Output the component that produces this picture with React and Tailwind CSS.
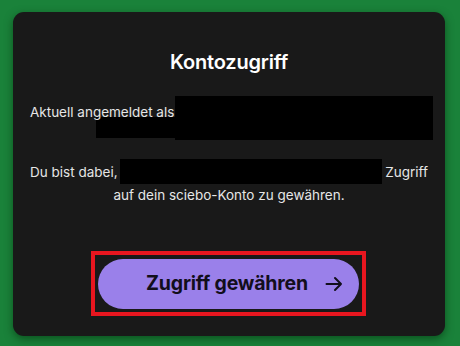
export default function App() {
  return (
    <div
      className="w-[460px] h-[346px] bg-[#1a823a] pt-[12px] pl-[13px]"
      style={{ fontFamily: 'Inter, "Noto Sans", sans-serif' }}
    >
      <div className="w-[432px] h-[324px] bg-[#191919] rounded-[11px] shadow-[0_3px_8px_rgba(0,40,10,0.55)] px-[17px] pt-[38px] flex flex-col">
        {/* Title */}
        <h1 className="text-center text-white text-[20px] font-semibold leading-[24px] tracking-[-0.2px]">
          Kontozugriff
        </h1>

        {/* Logged in as */}
        <div className="mt-[22px] text-[#e6e6e6] text-[13.5px] leading-[17px]">
          <div className="flex items-start">
            <span className="pt-[8px] whitespace-nowrap">Aktuell angemeldet als</span>
            <span className="flex-1 h-[44px] bg-black mr-[-5px] ml-[1px]" />
          </div>
          <div className="mt-[-23px] ml-[66px] mr-[-5px] h-[21px] bg-black" />
        </div>

        {/* Access text */}
        <div className="mt-[21px] text-[#e6e6e6] text-[13.5px] leading-[22px] text-center">
          <div className="flex items-center whitespace-nowrap">
            <span>Du bist dabei,</span>
            <span className="ml-[2px] flex-1 h-[25px] bg-black" />
            <span className="ml-[3px]">Zugriff</span>
          </div>
          <div>auf dein sciebo-Konto zu gewähren.</div>
        </div>

        {/* Button */}
        <div className="mt-[45px] flex justify-center">
          <div className="ml-[-1px] border-[4px] border-[#e8161f] px-[3px] pt-[4px] pb-[3px]">
            <button className="w-[261px] h-[50px] rounded-full bg-[#9a80ea] flex items-center justify-center pl-[32px] text-[#120e1c] text-[19.5px] font-bold tracking-[-0.2px] whitespace-nowrap">
              <span>Zugriff gewähren</span>
              <svg
                className="ml-[17px] shrink-0"
                width="18"
                height="16"
                viewBox="0 0 18 16"
                fill="none"
                stroke="#120e1c"
                strokeWidth="2"
                strokeLinecap="round"
                strokeLinejoin="round"
              >
                <path d="M1.5 8h14.5M10 2l6 6-6 6" />
              </svg>
            </button>
          </div>
        </div>
      </div>
    </div>
  );
}
